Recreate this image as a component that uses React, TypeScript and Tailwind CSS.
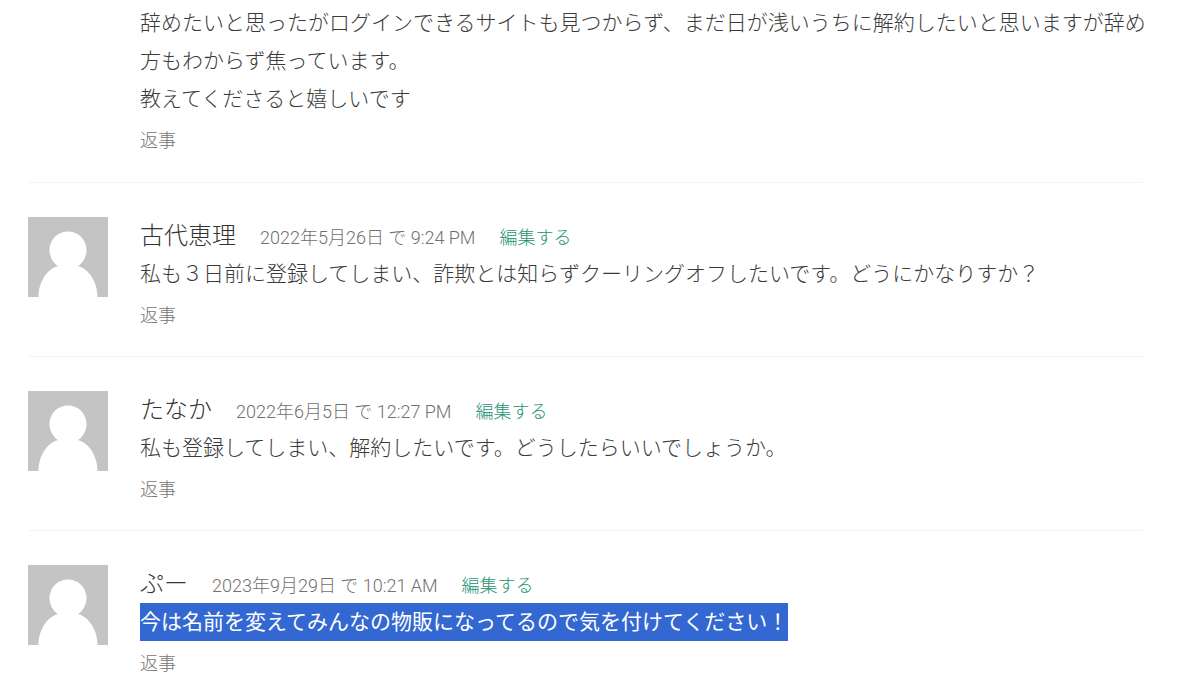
import React from 'react';

interface Comment {
  id: number;
  author: string;
  date: string;
  body: string;
  selected?: boolean;
}

const comments: Comment[] = [
  {
    id: 1,
    author: '古代恵理',
    date: '2022年5月26日 で 9:24 PM',
    body: '私も３日前に登録してしまい、詐欺とは知らずクーリングオフしたいです。どうにかなりすか？',
  },
  {
    id: 2,
    author: 'たなか',
    date: '2022年6月5日 で 12:27 PM',
    body: '私も登録してしまい、解約したいです。どうしたらいいでしょうか。',
  },
  {
    id: 3,
    author: 'ぷー',
    date: '2023年9月29日 で 10:21 AM',
    body: '今は名前を変えてみんなの物販になってるので気を付けてください！',
    selected: true,
  },
];

const Avatar: React.FC = () => (
  <svg viewBox="0 0 80 80" className="size-20 shrink-0" aria-hidden="true">
    <rect width="80" height="80" fill="#c4c4c4" />
    <path
      fill="#fff"
      d="M30 49C25 46 21.500 39.500 21.500 33C21.500 22.500 30 14.500 40 14.500C50 14.500 58.500 22.500 58.500 33C58.500 39.500 55 46 50 49C61 52 69.500 65 69.500 80H10.500C10.500 65 19 52 30 49Z"
    />
  </svg>
);

const ReplyLink: React.FC = () => (
  <a href="#respond" className="mt-1 block w-fit text-[18px] leading-[38px] text-[#757575]">
    返事
  </a>
);

const CommentItem: React.FC<{ comment: Comment }> = ({ comment }) => (
  <li className="flex gap-8 border-t border-[#f3f3f3] pt-[34px] pb-[21px]">
    <Avatar />
    <div className="min-w-0 flex-1">
      <div className="flex h-[38px] items-baseline gap-6 leading-[38px]">
        <span className="text-[24px] text-[#333]">{comment.author}</span>
        <time className="text-[18px] text-[#707070]">{comment.date}</time>
        <a href="#edit" className="text-[18px] text-[#1f9273]">編集する</a>
      </div>
      <p className="text-[21px] leading-[38px] text-[#3a3a3a]">
        {comment.selected ? (
          <span className="inline-block bg-[#3367d1] font-normal text-white">{comment.body}</span>
        ) : (
          comment.body
        )}
      </p>
      <ReplyLink />
    </div>
  </li>
);

const App: React.FC = () => {
  return (
    <main className="h-screen overflow-hidden bg-white pr-[58px] pl-7 font-['Roboto','Noto_Sans_CJK_JP',sans-serif] font-light">
      <ol>
        <li className="pt-1 pb-[22px] pl-28">
          <p className="-mr-2 text-[21px] leading-[38px] text-[#3a3a3a]">
            辞めたいと思ったがログインできるサイトも見つからず、まだ日が浅いうちに解約したいと思いますが辞め方もわからず焦っています。
            <br />
            教えてくださると嬉しいです
          </p>
          <ReplyLink />
        </li>
        {comments.map((comment) => (
          <CommentItem key={comment.id} comment={comment} />
        ))}
      </ol>
    </main>
  );
};

export default App;
